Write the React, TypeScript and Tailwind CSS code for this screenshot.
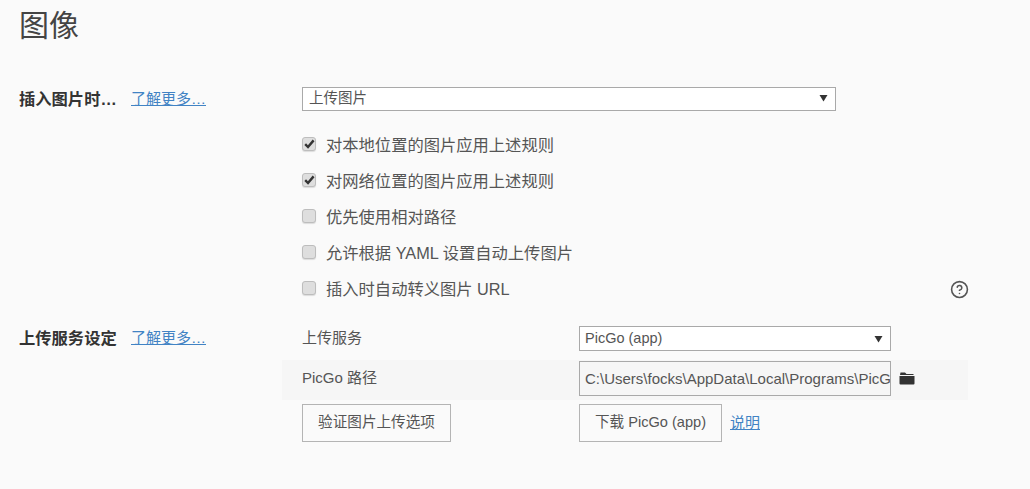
import { CircleHelp } from 'lucide-react';

const FONT = "font-['Liberation_Sans','Noto_Sans_CJK_SC',sans-serif]";

const checks = [
  { label: '对本地位置的图片应用上述规则', checked: true },
  { label: '对网络位置的图片应用上述规则', checked: true },
  { label: '优先使用相对路径', checked: false },
  { label: '允许根据 YAML 设置自动上传图片', checked: false },
  { label: '插入时自动转义图片 URL', checked: false },
];

function Arrow() {
  return (
    <svg width="9" height="8" viewBox="0 0 9 8" className="pointer-events-none absolute right-[8px] top-1/2 -translate-y-1/2">
      <path d="M0.5 1h8L4.5 7.5z" fill="#333" />
    </svg>
  );
}

function FolderIcon() {
  return (
    <svg width="16" height="13" viewBox="0 0 16 13" className="ml-[8px] mt-[11px] shrink-0">
      <path d="M1.5 0.5h4.5l1.5 1.5h7v1H1z" fill="#333" />
      <path d="M0.5 4h15v7.5a1 1 0 0 1-1 1h-13a1 1 0 0 1-1-1z" fill="#333" />
    </svg>
  );
}

function CheckBox({ checked }: { checked: boolean }) {
  return (
    <span className="mt-[-2px] flex h-[14px] w-[14px] shrink-0 items-center justify-center rounded-[3px] border border-[#bdbdbd] bg-[#dedede] shadow-[0_1px_1px_rgba(0,0,0,0.12)]">
      {checked && (
        <svg width="11" height="10" viewBox="0 0 11 10">
          <path d="M1.2 5.2 4 8 9.6 1.4" fill="none" stroke="#333" strokeWidth="2.4" />
        </svg>
      )}
    </span>
  );
}

export default function App() {
  return (
    <div className={`${FONT} h-[489px] w-[1030px] overflow-hidden bg-[#fafafa] pl-[19px] text-[#555]`}>
      <h1 className="h-[86px] pt-[6px] text-[30px] leading-[40px] font-normal text-[#444]">图像</h1>

      {/* Image insert section */}
      <div className="flex">
        <div className="flex h-[26px] w-[263px] items-center">
          <span className="w-[112px] text-[16.3px] font-bold text-[#333]">插入图片时…</span>
          <a className="text-[15px] text-[#4183c4] underline">了解更多…</a>
        </div>
        <div className="w-[686px] px-[20px]">
          <div className="relative h-[24px] w-[534px]">
            <select className="h-full w-full appearance-none border border-[#a9a9a9] bg-white pl-[6px] text-[14.5px] text-[#555] outline-none">
              <option>上传图片</option>
            </select>
            <Arrow />
          </div>
          <div className="mt-[17px]">
            {checks.map((c, i) => (
              <div key={c.label} className="flex h-[36px] items-center justify-between">
                <label className="flex items-center gap-[10px] text-[16.3px] text-[#555]">
                  <CheckBox checked={c.checked} />
                  {c.label}
                </label>
                {i === checks.length - 1 && (
                  <CircleHelp size={19} color="#555" className="mr-[-21px]" />
                )}
              </div>
            ))}
          </div>
        </div>
      </div>

      {/* Upload service section */}
      <div className="mt-[19px] flex">
        <div className="flex h-[25px] w-[263px] items-center">
          <span className="w-[112px] text-[16.3px] font-bold text-[#333]">上传服务设定</span>
          <a className="text-[15px] text-[#4183c4] underline">了解更多…</a>
        </div>
        <div className="w-[686px]">
          <div className="flex h-[25px] items-center px-[20px]">
            <span className="w-[277px] text-[15px]">上传服务</span>
            <div className="relative h-full w-[312px]">
              <select className="h-full w-full appearance-none border border-[#a9a9a9] bg-white pl-[5px] text-[14.5px] text-[#555] outline-none">
                <option>PicGo (app)</option>
              </select>
              <Arrow />
            </div>
          </div>
          <div className="mt-[9px] flex h-[40px] items-start bg-[#f6f6f6] px-[20px] pt-[1px]">
            <span className="flex h-[35px] w-[277px] items-center text-[15px]">PicGo 路径</span>
            <input
              readOnly
              value="C:\Users\focks\AppData\Local\Programs\PicGo\PicGo.exe"
              className="h-[35px] w-[312px] border border-[#a9a9a9] bg-transparent pl-[5px] text-[15px] text-[#555] outline-none"
            />
            <FolderIcon />
          </div>
          <div className="mt-[4px] flex h-[38px] px-[20px]">
            <div className="w-[277px]">
              <button className="h-[38px] w-[149px] border border-[#b4b4b4] text-[14.6px] text-[#555]">验证图片上传选项</button>
            </div>
            <button className="h-[38px] w-[143px] border border-[#b4b4b4] text-[14.6px] text-[#555]">下载 PicGo (app)</button>
            <a className="ml-[8px] self-center text-[15px] text-[#4183c4] underline">说明</a>
          </div>
        </div>
      </div>
    </div>
  );
}
